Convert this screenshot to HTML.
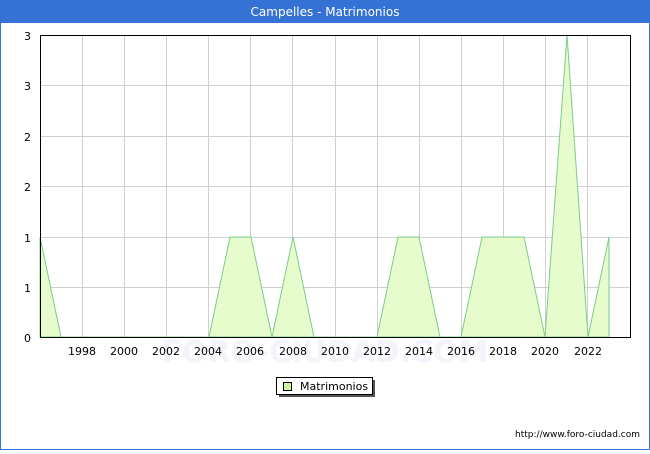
<!DOCTYPE html>
<html><head><style>
body{margin:0;width:650px;height:450px;overflow:hidden;background:#fff;font-family:"DejaVu Sans","Liberation Sans",sans-serif;}
</style></head><body>
<svg width="650" height="450" xmlns="http://www.w3.org/2000/svg" font-family="DejaVu Sans, Liberation Sans, sans-serif">
<rect x="0.5" y="0.5" width="649" height="449" fill="#fff" stroke="#3572d6"/>
<rect x="0" y="0" width="650" height="23" fill="#3572d6"/>
<text x="325" y="16" text-anchor="middle" fill="#fff" font-size="12">Campelles - Matrimonios</text>
<text x="325" y="362" text-anchor="middle" fill="#f3f4fb" font-size="30" font-weight="bold">FORO-CIUDAD.COM</text>
<g stroke="#d0d0d0" stroke-width="1">
<line x1="40" y1="85.5" x2="630" y2="85.5"/><line x1="40" y1="136.5" x2="630" y2="136.5"/><line x1="40" y1="186.5" x2="630" y2="186.5"/><line x1="40" y1="237.5" x2="630" y2="237.5"/><line x1="40" y1="287.5" x2="630" y2="287.5"/>
<line x1="82.5" y1="35" x2="82.5" y2="337"/><line x1="124.5" y1="35" x2="124.5" y2="337"/><line x1="166.5" y1="35" x2="166.5" y2="337"/><line x1="208.5" y1="35" x2="208.5" y2="337"/><line x1="250.5" y1="35" x2="250.5" y2="337"/><line x1="292.5" y1="35" x2="292.5" y2="337"/><line x1="335.5" y1="35" x2="335.5" y2="337"/><line x1="377.5" y1="35" x2="377.5" y2="337"/><line x1="419.5" y1="35" x2="419.5" y2="337"/><line x1="461.5" y1="35" x2="461.5" y2="337"/><line x1="503.5" y1="35" x2="503.5" y2="337"/><line x1="545.5" y1="35" x2="545.5" y2="337"/><line x1="587.5" y1="35" x2="587.5" y2="337"/>
</g>
<polygon fill="#e6fccc" stroke="#7ccc88" stroke-width="1" points="40,337 40,237 61,337 209,337 230,237 251,237 272,337 293,237 314,337 377,337 398,237 419,237 440,337 461,337 482,237 503,237 524,237 545,337 567,35 588,337 609,237 609,337"/>
<rect x="40.5" y="35.5" width="590" height="302" fill="none" stroke="#000"/>
<g font-size="11" fill="#000" text-anchor="end">
<text x="31" y="40">3</text><text x="31" y="90">3</text><text x="31" y="141">2</text><text x="31" y="191">2</text><text x="31" y="242">1</text><text x="31" y="292">1</text><text x="31" y="342">0</text>
</g>
<g font-size="11" fill="#000" text-anchor="middle">
<text x="82" y="355">1998</text><text x="124" y="355">2000</text><text x="166" y="355">2002</text><text x="208" y="355">2004</text><text x="250" y="355">2006</text><text x="293" y="355">2008</text><text x="335" y="355">2010</text><text x="377" y="355">2012</text><text x="419" y="355">2014</text><text x="461" y="355">2016</text><text x="503" y="355">2018</text><text x="545" y="355">2020</text><text x="588" y="355">2022</text>
</g>
<rect x="279" y="380" width="96" height="17" fill="#555"/>
<rect x="276.5" y="377.5" width="96" height="17" fill="#fff" stroke="#000"/>
<rect x="283.5" y="382.5" width="8" height="8" fill="#ccf5a0" stroke="#000"/>
<text x="300" y="390" font-size="11">Matrimonios</text>
<text x="640" y="437" font-size="9" text-anchor="end">http://www.foro-ciudad.com</text>
</svg>
</body></html>
